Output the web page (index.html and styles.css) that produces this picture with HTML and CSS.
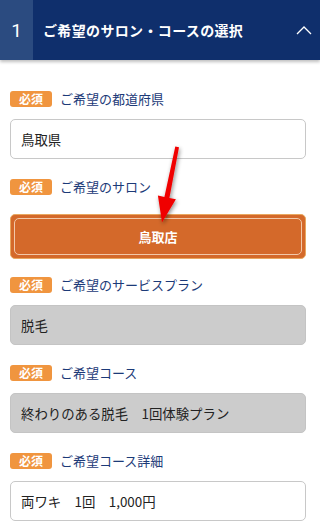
FILE: index.html
```html
<!DOCTYPE html>
<html lang="ja">
<head>
<meta charset="utf-8">
<link rel="stylesheet" href="styles.css">
</head>
<body>
<header class="head">
  <div class="num">1</div>
  <div class="title">ご希望のサロン・コースの選択</div>
  <svg class="chev" width="16" height="10" viewBox="0 0 16 10"><path d="M1 9 L8 2 L15 9" fill="none" stroke="#fff" stroke-width="1.3"/></svg>
</header>
<main class="form">
  <div class="field">
    <div class="lab"><span class="req">必須</span><span class="ltxt">ご希望の都道府県</span></div>
    <div class="box">鳥取県</div>
  </div>
  <div class="field">
    <div class="lab"><span class="req">必須</span><span class="ltxt">ご希望のサロン</span></div>
    <div class="btn"><span>鳥取店</span></div>
  </div>
  <div class="field">
    <div class="lab"><span class="req">必須</span><span class="ltxt">ご希望のサービスプラン</span></div>
    <div class="box gray">脱毛</div>
  </div>
  <div class="field">
    <div class="lab"><span class="req">必須</span><span class="ltxt">ご希望コース</span></div>
    <div class="box gray">終わりのある脱毛　1回体験プラン</div>
  </div>
  <div class="field">
    <div class="lab"><span class="req">必須</span><span class="ltxt">ご希望コース詳細</span></div>
    <div class="box">両ワキ　1回　1,000円</div>
  </div>
</main>
<svg class="arrow" width="320" height="260" viewBox="0 0 320 260">
  <defs>
    <filter id="sh" x="-50%" y="-50%" width="200%" height="200%">
      <feDropShadow dx="1" dy="2" stdDeviation="2" flood-color="#000" flood-opacity="0.45"/>
    </filter>
  </defs>
  <polygon filter="url(#sh)" fill="#f00000" points="175.3,146.5 179,147.3 169.4,198 175.9,199.3 162,222.5 157.9,195.6 164.4,197"/>
</svg>
</body>
</html>
```
FILE: styles.css
```css
html, body {
  margin: 0;
  padding: 0;
  background: #fff;
}
body {
  position: relative;
  width: 320px;
  height: 526px;
  overflow: hidden;
  font-family: "Noto Sans CJK JP", "Noto Sans", sans-serif;
}
.head {
  display: flex;
  align-items: center;
  height: 60px;
  background: #0f2f6c;
  box-shadow: 0 2px 3px rgba(0, 0, 0, 0.25);
  position: relative;
}
.num {
  width: 33px;
  height: 60px;
  background: #2b4b80;
  color: #fff;
  font-family: "Roboto", "Noto Sans", sans-serif;
  font-size: 19px;
  display: flex;
  align-items: center;
  justify-content: center;
}
.title {
  flex: 1;
  padding-left: 10px;
  color: #fff;
  font-weight: 700;
  font-size: 14px;
  letter-spacing: 0.35px;
}
.chev {
  margin-right: 8px;
  margin-top: -1px;
}
.form {
  padding: 31px 14px 0 10px;
  display: flex;
  flex-direction: column;
}
.field {
  display: flex;
  flex-direction: column;
  margin-bottom: 20px;
}
.lab {
  display: flex;
  align-items: center;
  height: 16px;
  margin-bottom: 12px;
}
.req {
  width: 42px;
  height: 16px;
  border-radius: 3px;
  background: #f0953f;
  color: #fff;
  font-weight: 700;
  font-size: 12px;
  line-height: 16px;
  text-align: center;
}
.ltxt {
  margin-left: 8px;
  color: #1c3a78;
  font-size: 13px;
  margin-top: -2px;
}
.box {
  height: 40px;
  box-sizing: border-box;
  border: 1px solid #c8c8c8;
  border-radius: 5px;
  padding: 0 10px;
  display: flex;
  align-items: center;
  font-size: 13.4px;
  color: #222;
}
.gray {
  background: #cccccc;
  border-color: #c4c4c4;
}
.field:nth-child(2) .lab {
  margin-bottom: 19px;
}
.field:nth-child(2) {
  margin-bottom: 18px;
}
.btn {
  height: 45px;
  box-sizing: border-box;
  border-radius: 5px;
  background: #d4692a;
  border: 1px solid #e8a860;
  padding: 3px;
  display: flex;
}
.btn span {
  flex: 1;
  border: 1.5px solid #f2c8a8;
  border-radius: 5px;
  display: flex;
  align-items: center;
  justify-content: center;
  color: #fff;
  font-weight: 700;
  font-size: 13px;
}
.arrow {
  position: absolute;
  left: 0;
  top: 0;
  pointer-events: none;
}
```
